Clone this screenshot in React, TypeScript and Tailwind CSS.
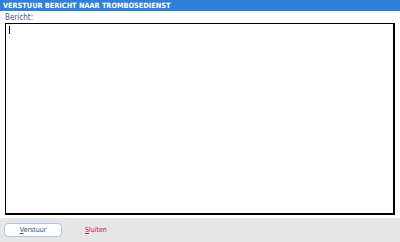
export default function App() {
  return (
    <div className="w-[400px] h-[242px] flex flex-col bg-white" style={{ fontFamily: '"DejaVu Sans Condensed", "DejaVu Sans", Verdana, sans-serif' }}>
      <div className="h-[11px] bg-[#2f80d8] text-white text-[7.3px] font-bold leading-[11px] pl-[3px]">
        VERSTUUR BERICHT NAAR TROMBOSEDIENST
      </div>
      <div className="flex-1 flex flex-col px-[5px] pt-[2px] pb-[3px]">
        <div className="text-[8px] leading-[10px] text-[#3b5f8a]">Bericht:</div>
        <div className="flex-1 border border-black border-r-2 border-b-2 bg-white px-[3px] pt-[2px]">
          <div className="w-px h-[8px] bg-black" />
        </div>
      </div>
      <div className="h-[24px] bg-[#e6e6e6] flex items-center pl-[4px]">
        <div className="w-[58px] h-[14px] bg-white border border-[#a8c8ef] rounded-[4px] flex items-center justify-center text-[7px] text-[#2a4f8a]">
          <span><span className="underline">V</span>erstuur</span>
        </div>
        <div className="ml-[23px] text-[7px] text-[#c8143c]">
          <span className="underline">S</span>luiten
        </div>
      </div>
    </div>
  );
}
